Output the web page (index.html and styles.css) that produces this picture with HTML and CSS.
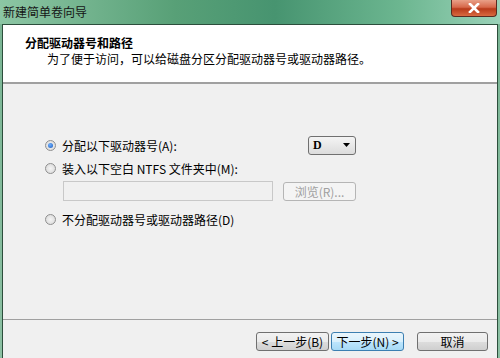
FILE: index.html
```html
<!DOCTYPE html>
<html lang="zh-CN">
<head>
    <meta charset="UTF-8">
    <title>新建简单卷向导</title>
    <link rel="stylesheet" href="styles.css">
</head>
<body>
    <div class="window">
        <div class="titlebar">
            <span class="title">新建简单卷向导</span>
            <div class="close-btn">
                <svg width="14" height="10" viewBox="0 0 14 10">
                    <path d="M3 1 L11 9 M11 1 L3 9" stroke="#fff" stroke-width="2.6" stroke-linecap="square"/>
                </svg>
            </div>
        </div>

        <div class="frame">
            <div class="client">
                <!-- header -->
                <div class="header">
                    <h1>分配驱动器号和路径</h1>
                    <p>为了便于访问，可以给磁盘分区分配驱动器号或驱动器路径。</p>
                </div>

                <!-- options -->
                <div class="body">
                    <div class="option-row">
                        <label class="radio-label">
                            <span class="radio checked"></span>分配以下驱动器号(A):
                        </label>
                        <div class="dropdown">
                            <span>D</span>
                            <svg width="7" height="4" viewBox="0 0 7 4"><path d="M0 0 H7 L3.5 4 Z" fill="#000"/></svg>
                        </div>
                    </div>
                    <div class="option-row">
                        <label class="radio-label">
                            <span class="radio"></span>装入以下空白 NTFS 文件夹中(M):
                        </label>
                    </div>
                    <div class="folder-row">
                        <div class="text-input"></div>
                        <div class="btn disabled">浏览(R)...</div>
                    </div>
                    <div class="option-row last">
                        <label class="radio-label">
                            <span class="radio"></span>不分配驱动器号或驱动器路径(D)
                        </label>
                    </div>
                </div>

                <!-- buttons -->
                <div class="footer">
                    <div class="btn">&lt; 上一步(B)</div>
                    <div class="btn focused">下一步(N) &gt;</div>
                    <div class="btn cancel">取消</div>
                </div>
            </div>
        </div>
    </div>
</body>
</html>
```

FILE: styles.css
```css
* {
    margin: 0;
    padding: 0;
    box-sizing: border-box;
}

body {
    width: 500px;
    height: 358px;
    overflow: hidden;
    font-family: "Noto Sans CJK SC", "DejaVu Sans", sans-serif;
    font-size: 12px;
    color: #000;
}

.window {
    width: 500px;
    height: 358px;
    display: flex;
    flex-direction: column;
    background: #6fae8a;
}

.titlebar {
    height: 24px;
    display: flex;
    justify-content: space-between;
    align-items: flex-start;
    background: linear-gradient(to right, #8cc6a4 0%, #58a077 35%, #479470 55%, #6cb690 80%, #9ad2b8 100%);
}

.title {
    padding-left: 3px;
    line-height: 24px;
    font-size: 12px;
    color: #151515;
}

.close-btn {
    width: 46px;
    height: 17px;
    margin-right: 3px;
    display: flex;
    justify-content: center;
    align-items: center;
    background: linear-gradient(to bottom, #e9a088 0%, #d7684a 45%, #b83a1a 55%, #d86a40 100%);
    border: 1px solid #5a2a20;
    border-top: none;
    border-radius: 0 0 4px 4px;
}

.frame {
    flex: 1;
    padding: 0 2px;
    display: flex;
    background: linear-gradient(to bottom, #7ab594, #8cc0a3);
}

.client {
    flex: 1;
    display: flex;
    flex-direction: column;
    background: #f0f0f0;
    border: 1px solid #2c4e3c;
    border-bottom: none;
}

.header {
    height: 59px;
    background: #fff;
    padding: 10px 0 0 22px;
    border-bottom: 2px solid #a0a0a0;
}

.header h1 {
    font-size: 12px;
    font-weight: bold;
    line-height: 16px;
}

.header p {
    padding-left: 22px;
    line-height: 16px;
}

.body {
    height: 236px;
    padding: 51px 0 0 42px;
    border-bottom: 1px solid #a0a0a0;
}

.option-row {
    display: flex;
    align-items: center;
    height: 20px;
    margin-bottom: 3px;
}

.option-row.last {
    margin-top: 4px;
}

.radio-label {
    width: 263px;
    display: flex;
    align-items: center;
    white-space: nowrap;
}

.radio {
    width: 11px;
    height: 11px;
    border-radius: 50%;
    margin-right: 6px;
    border: 1px solid #8f8f8f;
    background: radial-gradient(circle, #f4f4f4 0%, #d6d6d6 100%);
    display: flex;
    justify-content: center;
    align-items: center;
}

.radio.checked::after {
    content: "";
    width: 5px;
    height: 5px;
    border-radius: 50%;
    background: radial-gradient(circle at 40% 35%, #6fb0ff, #1d5dbd);
}

.dropdown {
    width: 48px;
    height: 19px;
    display: flex;
    justify-content: space-between;
    align-items: center;
    padding: 0 5px 0 4px;
    border: 1px solid #707070;
    border-radius: 3px;
    background: linear-gradient(to bottom, #f4f4f4, #dcdcdc);
    font-family: "Liberation Serif", serif;
    font-weight: bold;
}

.folder-row {
    display: flex;
    align-items: center;
    gap: 10px;
    padding-left: 18px;
    margin-bottom: 8px;
}

.text-input {
    width: 210px;
    height: 20px;
    border: 1px solid #c8c8c8;
    background: #f0f0f0;
}

.btn {
    height: 19px;
    display: flex;
    justify-content: center;
    align-items: center;
    padding: 0 6px;
    border: 1px solid #707070;
    border-radius: 3px;
    background: linear-gradient(to bottom, #f2f2f2 0%, #ebebeb 50%, #dddddd 51%, #cfcfcf 100%);
    white-space: nowrap;
}

.btn.disabled {
    width: 73px;
    color: #a0a0a0;
    border-color: #b5b5b5;
    background: #f4f4f4;
}

.footer {
    flex: 1;
    display: flex;
    align-items: flex-start;
    padding: 12px 0 0 253px;
}

.footer .btn {
    width: 73px;
}

.btn.focused {
    margin-left: 2px;
    border-color: #3c7fb1;
    background: linear-gradient(to bottom, #eaf6fd 0%, #d9f0fc 50%, #bee6fd 51%, #a7d9f5 100%);
}

.btn.cancel {
    width: 71px;
    margin-left: 13px;
}
```
